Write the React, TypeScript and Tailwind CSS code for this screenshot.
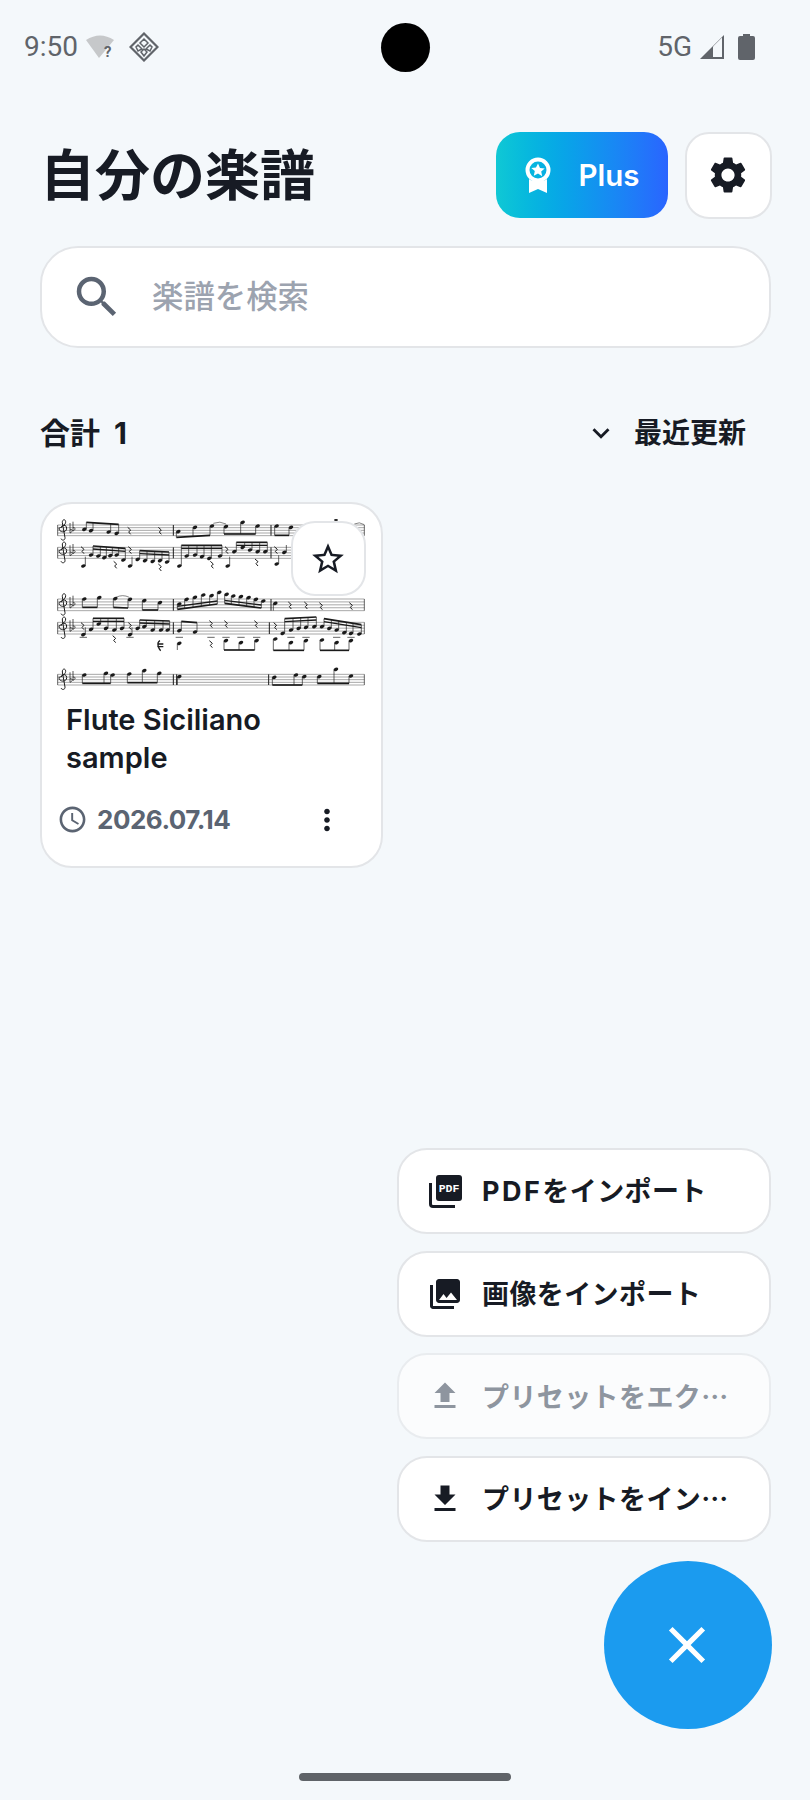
import React from "react";
import { MdSettings, MdSearch, MdFileUpload, MdFileDownload, MdClose, MdMoreVert, MdStarBorder, MdAccessTime, MdKeyboardArrowDown, MdPhotoLibrary } from "react-icons/md";

type P = [number, number];
const ink = "#1a1a1a";

function Beam({ n, y1, y2, dbl }: { n: P[]; y1: number; y2: number; dbl?: boolean }) {
  const x0 = n[0][0];
  const x1 = n[n.length - 1][0];
  const up = y1 < n[0][1];
  const off = up ? 6 : -6;
  const at = (x: number) => (x1 === x0 ? y1 : y1 + ((y2 - y1) * (x - x0)) / (x1 - x0));
  return (
    <g>
      {n.map(([x, y], i) => (
        <g key={i}>
          <ellipse cx={x} cy={y} rx="7" ry="5" fill={ink} transform={`rotate(-20 ${x} ${y})`} />
          <line x1={x + off} y1={y} x2={x + off} y2={at(x)} stroke={ink} strokeWidth="2" />
        </g>
      ))}
      {n.length > 1 && <line x1={x0 + off} y1={y1} x2={x1 + off} y2={y2} stroke={ink} strokeWidth="5" />}
      {n.length > 1 && dbl && <line x1={x0 + off} y1={y1 + (up ? 9 : -9)} x2={x1 + off} y2={y2 + (up ? 9 : -9)} stroke={ink} strokeWidth="4" />}
    </g>
  );
}

function Rest({ x, y }: { x: number; y: number }) {
  return <path d={`M${x - 5} ${y - 8} l9 8 l-6 6 l6 7`} fill="none" stroke={ink} strokeWidth="3" />;
}

function Staff({ y, h, bars, x2 = 1005 }: { y: number; h: number; bars: number[]; x2?: number }) {
  return (
    <g>
      {[0, 1, 2, 3, 4].map((i) => (
        <line key={i} x1="85" x2={x2} y1={y + (h * i) / 4} y2={y + (h * i) / 4} stroke="#444" strokeWidth="1.4" />
      ))}
      <line x1="85" x2="85" y1={y} y2={y + h} stroke={ink} strokeWidth="2" />
      <line x1={x2} x2={x2} y1={y} y2={y + h} stroke={ink} strokeWidth="2" />
      {bars.map((b) => (
        <line key={b} x1={b} x2={b} y1={y} y2={y + h} stroke={ink} strokeWidth="3" />
      ))}
      <path
        d={`M95 ${y + h + 9} c3 7 13 5 12 -3 L99 ${y - 7} c-1 -10 9 -12 10 -3 c1 11 -20 20 -20 ${h * 0.6} c0 15 24 15 23 0 c0 -11 -16 -11 -16 -1`}
        fill="none"
        stroke={ink}
        strokeWidth="3"
      />
      <path d={`M122 ${y - 6} v${h - 2} c9 -4 10 -11 0 -11`} fill="none" stroke={ink} strokeWidth="2.2" />
      <path d={`M131 ${y - 10} v${h - 4} c8 -4 9 -10 0 -10`} fill="none" stroke={ink} strokeWidth="2.2" />
    </g>
  );
}

function Score() {
  return (
    <svg viewBox="80 75 930 525" className="block w-[310px] h-[175px] blur-[0.4px]">
      <Staff y={105} h={32} bars={[432, 725]} />
      <Beam n={[[165, 118], [185, 122], [238, 126], [262, 130]]} y1={97} y2={103} />
      <Rest x={300} y={120} />
      <Rest x={392} y={120} />
      <Beam n={[[447, 125], [497, 112], [548, 108]]} y1={142} y2={136} />
      <Beam n={[[590, 110], [640, 97], [685, 108]]} y1={132} y2={132} />
      <path d="M552 100 q20 -8 38 2" fill="none" stroke={ink} strokeWidth="1.6" />
      <Beam n={[[742, 108], [785, 112]]} y1={136} y2={136} />
      <ellipse cx="920" cy="90" rx="6" ry="3" fill={ink} />
      <path d="M975 102 q15 -8 30 2" fill="none" stroke={ink} strokeWidth="1.6" />

      <Staff y={172} h={33} bars={[432, 725]} />
      <Rest x={160} y={178} />
      <Beam n={[[185, 195], [207, 198], [225, 203], [243, 197], [262, 195], [282, 210]]} y1={168} y2={175} dbl />
      <Rest x={302} y={178} />
      <Beam n={[[325, 208], [347, 212], [370, 214], [392, 212], [413, 216]]} y1={182} y2={186} dbl />
      <Beam n={[[162, 228]]} y1={200} y2={200} />
      <Beam n={[[302, 228]]} y1={200} y2={200} />
      <Rest x={258} y={222} />
      <Rest x={392} y={230} />
      <Beam n={[[450, 228], [472, 198], [497, 195], [518, 200], [540, 205], [572, 198]]} y1={166} y2={166} dbl />
      <Rest x={592} y={178} />
      <Beam n={[[615, 185], [640, 172], [662, 180], [685, 185], [708, 185]]} y1={157} y2={157} dbl />
      <Rest x={548} y={222} />
      <Beam n={[[595, 228]]} y1={200} y2={200} />
      <Rest x={682} y={215} />
      <Rest x={740} y={178} />
      <Beam n={[[765, 187]]} y1={165} y2={165} />
      <Beam n={[[742, 222]]} y1={196} y2={196} />

      <Staff y={327} h={35} bars={[432, 725]} />
      <Beam n={[[165, 327], [210, 323]]} y1={352} y2={352} />
      <Beam n={[[258, 326], [302, 328]]} y1={352} y2={354} />
      <Beam n={[[345, 332], [392, 338]]} y1={360} y2={360} />
      <path d="M260 322 q20 -10 40 0" fill="none" stroke={ink} strokeWidth="1.6" />
      <Beam n={[[450, 342], [472, 328], [497, 322], [522, 315], [547, 317], [570, 307]]} y1={358} y2={342} dbl />
      <Beam n={[[592, 313], [612, 318], [635, 320], [658, 323], [680, 328], [702, 333]]} y1={340} y2={354} dbl />
      <Beam n={[[738, 340]]} y1={362} y2={362} />
      <Rest x={782} y={344} />
      <Rest x={830} y={344} />
      <Rest x={875} y={346} />
      <Rest x={965} y={346} />

      <Staff y={397} h={35} bars={[432, 720]} />
      <Rest x={160} y={406} />
      <Beam n={[[185, 418], [208, 402], [230, 415], [255, 420], [278, 415]]} y1={385} y2={385} dbl />
      <Rest x={302} y={406} />
      <Beam n={[[325, 415], [345, 410], [370, 420], [395, 420], [415, 420]]} y1={390} y2={393} dbl />
      <Beam n={[[162, 434]]} y1={412} y2={412} />
      <Beam n={[[302, 434]]} y1={412} y2={412} />
      <Rest x={255} y={445} />
      <Beam n={[[450, 422], [497, 426]]} y1={394} y2={398} />
      <Rest x={545} y={400} />
      <Rest x={590} y={400} />
      <Rest x={680} y={400} />
      <Rest x={738} y={406} />
      <Beam n={[[760, 430], [785, 420], [808, 415], [830, 412], [855, 410]]} y1={386} y2={381} dbl />
      <Beam n={[[878, 410], [900, 415], [922, 420], [945, 428], [965, 430], [990, 432]]} y1={386} y2={404} dbl />
      <path d="M392 452 c-12 6 -4 24 2 30 M384 462 h18 M384 470 h18" fill="none" stroke={ink} strokeWidth="4" />
      <Beam n={[[450, 460]]} y1={480} y2={480} />
      <Rest x={545} y={460} />
      <Beam n={[[590, 452], [635, 458], [682, 452]]} y1={480} y2={480} />
      <Beam n={[[738, 447], [785, 458], [830, 452]]} y1={481} y2={481} />
      <Beam n={[[878, 450], [922, 458], [965, 452]]} y1={481} y2={481} />
      {[162, 302, 450, 545, 590, 635, 682, 785, 830, 922, 965].map((x) => (
        <line key={x} x1={x - 11} x2={x + 11} y1="442" y2="442" stroke={ink} strokeWidth="2" />
      ))}

      <Staff y={553} h={32} bars={[432, 442, 718]} />
      <Beam n={[[165, 555], [230, 550], [250, 555]]} y1={580} y2={580} />
      <Beam n={[[300, 552], [345, 542], [390, 550]]} y1={578} y2={578} />
      <Beam n={[[450, 560]]} y1={585} y2={585} />
      <Beam n={[[735, 562], [800, 555], [825, 560]]} y1={585} y2={585} />
      <Beam n={[[870, 560], [920, 538], [965, 558]]} y1={580} y2={580} />
    </svg>
  );
}

function MenuItem({ icon, children, muted }: { icon: React.ReactNode; children: React.ReactNode; muted?: boolean }) {
  return (
    <div
      className={
        "flex items-center h-[86px] w-[374px] rounded-[30px] border-2 pl-[28px] gap-[19px] font-['Noto_Sans_CJK_JP',sans-serif] " +
        (muted ? "bg-white/60 border-[#e9ecef] text-[#8e959f]" : "bg-white border-[#e3e5e8] text-[#171b24]")
      }
    >
      <span className="w-[36px] flex justify-center shrink-0">{icon}</span>
      <span className="whitespace-nowrap text-[27px] font-bold tracking-[0.4px]">{children}</span>
    </div>
  );
}

function PdfIcon() {
  return (
    <svg width="33" height="33" viewBox="0 0 33 33">
      <rect x="7" y="0" width="26" height="26" rx="3" fill="#171b24" />
      <text x="20" y="17" textAnchor="middle" fontSize="11.5" fontWeight="700" fill="#fff" fontFamily="'Liberation Mono',monospace">PDF</text>
      <path d="M1.5 8v21a2.5 2.5 0 0 0 2.5 2.5h22" fill="none" stroke="#171b24" strokeWidth="3" />
    </svg>
  );
}

export default function App() {
  return (
    <div className="relative min-h-[1800px] w-[810px] overflow-hidden bg-[#f4f8fb] font-['Inter','Noto_Sans_CJK_JP',sans-serif] text-[#171b24]">
      {/* status bar */}
      <div className="flex h-[96px] items-center justify-between pl-6 pr-[55px] pb-[2px] text-[#60646a] font-['Roboto',sans-serif] text-[28px]">
        <div className="flex items-center">
          <span>9:50</span>
          <svg width="30" height="28" viewBox="0 0 30 28" className="ml-[8px]">
            <path d="M0 7 Q14 -2 28 7 L13 25 Z" fill="#c6c8ca" />
            <text x="18" y="24" fontSize="15" fontWeight="700" fill="#60646a" fontFamily="Roboto,sans-serif">?</text>
          </svg>
          <svg width="30" height="30" viewBox="0 0 30 30" className="ml-[13px]" fill="none" stroke="#60646a">
            <path d="M15 1.5 28.5 15 15 28.5 1.5 15Z" strokeWidth="2.2" />
            <path d="M15 7l4 4-4 4-4-4zM9 13l4 4-4 2-2-4zM21 13l-4 4 4 2 2-4zM15 17l3 3-3 4-3-4z" strokeWidth="1.5" />
          </svg>
        </div>
        <div className="flex items-center">
          <span className="text-[28px]">5G</span>
          <svg width="26" height="26" viewBox="0 0 26 26" className="ml-[7px]">
            <path d="M25 1V25H1Z" fill="#60646a" />
            <path d="M14 12.5 23 3.5V23H14Z" fill="#f4f8fb" />
          </svg>
          <svg width="17" height="26" viewBox="0 0 17 26" className="ml-[13px]">
            <path d="M5 2V0h7v2h3a2 2 0 0 1 2 2v20a2 2 0 0 1-2 2H2a2 2 0 0 1-2-2V4a2 2 0 0 1 2-2z" fill="#60646a" />
          </svg>
        </div>
      </div>
      <div className="absolute left-[381px] top-[23px] h-[49px] w-[49px] rounded-full bg-black" />

      <div className="pl-10 pr-[38px] pt-[36px]">
        {/* title row */}
        <div className="flex h-[86px] items-center">
          <h1 className="text-[55px] font-bold leading-none flex-1">自分の楽譜</h1>
          <div className="flex h-[86px] w-[172px] items-center justify-center gap-[26px] rounded-[24px] bg-gradient-to-r from-[#10c8d4] to-[#2a64ff] text-white">
            <svg width="28" height="36" viewBox="0 0 28 36">
              <circle cx="14" cy="13" r="10.5" fill="none" stroke="#fff" strokeWidth="4" />
              <path d="M14 6.5l2 4.4 4.7.5-3.5 3.2 1 4.7L14 16.5l-4.2 2.3 1-4.7-3.5-3.2 4.7-.5z" fill="#fff" />
              <path d="M5 22c3 3 15 3 18 0v14l-9-4-9 4z" fill="#fff" />
            </svg>
            <span className="text-[29.5px] font-semibold">Plus</span>
          </div>
          <div className="ml-[17px] flex h-[87px] w-[87px] items-center justify-center rounded-[24px] border-2 border-[#e3e5e8] bg-white">
            <MdSettings size={44} color="#171b24" className="-ml-[2px]" />
          </div>
        </div>

        {/* search */}
        <div className="mt-[28px] flex h-[102px] items-center rounded-[38px] border-2 border-[#e3e5e8] bg-white pl-[28px] mr-[1px]">
          <MdSearch size={54} color="#5b6472" className="shrink-0" />
          <span className="ml-[28px] mt-[2px] text-[31.4px] font-medium text-[#9ca3af]">楽譜を検索</span>
        </div>

        {/* count row */}
        <div className="mt-[65px] flex h-[40px] items-center justify-between pr-[26px]">
          <span className="text-[30px] font-bold [word-spacing:7px]">合計 1</span>
          <div className="flex items-center">
            <MdKeyboardArrowDown size={34} color="#171b24" />
            <span className="ml-[16px] text-[28px] font-bold">最近更新</span>
          </div>
        </div>

        {/* card */}
        <div className="relative mt-[49px] h-[366px] w-[343px] rounded-[32px] border-2 border-[#e3e5e8] bg-white">
          <div className="pl-[14px] pt-[11px]">
            <Score />
          </div>
          <div className="absolute left-[249px] top-[17px] flex h-[75px] w-[75px] items-center justify-center rounded-[24px] border-2 border-[#e3e5e8] bg-white">
            <MdStarBorder size={38} color="#171b24" className="-ml-[1px]" />
          </div>
          <p className="ml-[24px] mt-[11px] w-[290px] text-[29px] font-semibold leading-[38px]">Flute Siciliano sample</p>
          <div className="ml-[15px] mt-[23px] flex items-center pr-[37px]">
            <MdAccessTime size={31} color="#5b6472" />
            <span className="ml-[9px] flex-1 text-[26px] font-bold text-[#5b6472] tracking-[-0.5px]">2026.07.14</span>
            <MdMoreVert size={34} color="#171b24" />
          </div>
        </div>
      </div>

      {/* floating actions */}
      <div className="absolute right-[39px] top-[1148px] flex flex-col gap-[16.5px]">
        <MenuItem icon={<PdfIcon />}><span className="font-['Inter',sans-serif] tracking-[2.5px]">PDF</span>をインポート</MenuItem>
        <MenuItem icon={<MdPhotoLibrary size={40} />}>画像をインポート</MenuItem>
        <MenuItem icon={<MdFileUpload size={40} />} muted>プリセットをエク…</MenuItem>
        <MenuItem icon={<MdFileDownload size={40} />}>プリセットをイン…</MenuItem>
      </div>
      <div className="absolute left-[604px] top-[1561px] flex h-[168px] w-[168px] items-center justify-center rounded-full bg-[#1b9bef]">
        <MdClose size={62} color="#fff" className="-ml-[2px]" />
      </div>
      <div className="absolute left-[299px] top-[1773px] h-[8px] w-[212px] rounded-full bg-[#5f6368]" />
    </div>
  );
}
